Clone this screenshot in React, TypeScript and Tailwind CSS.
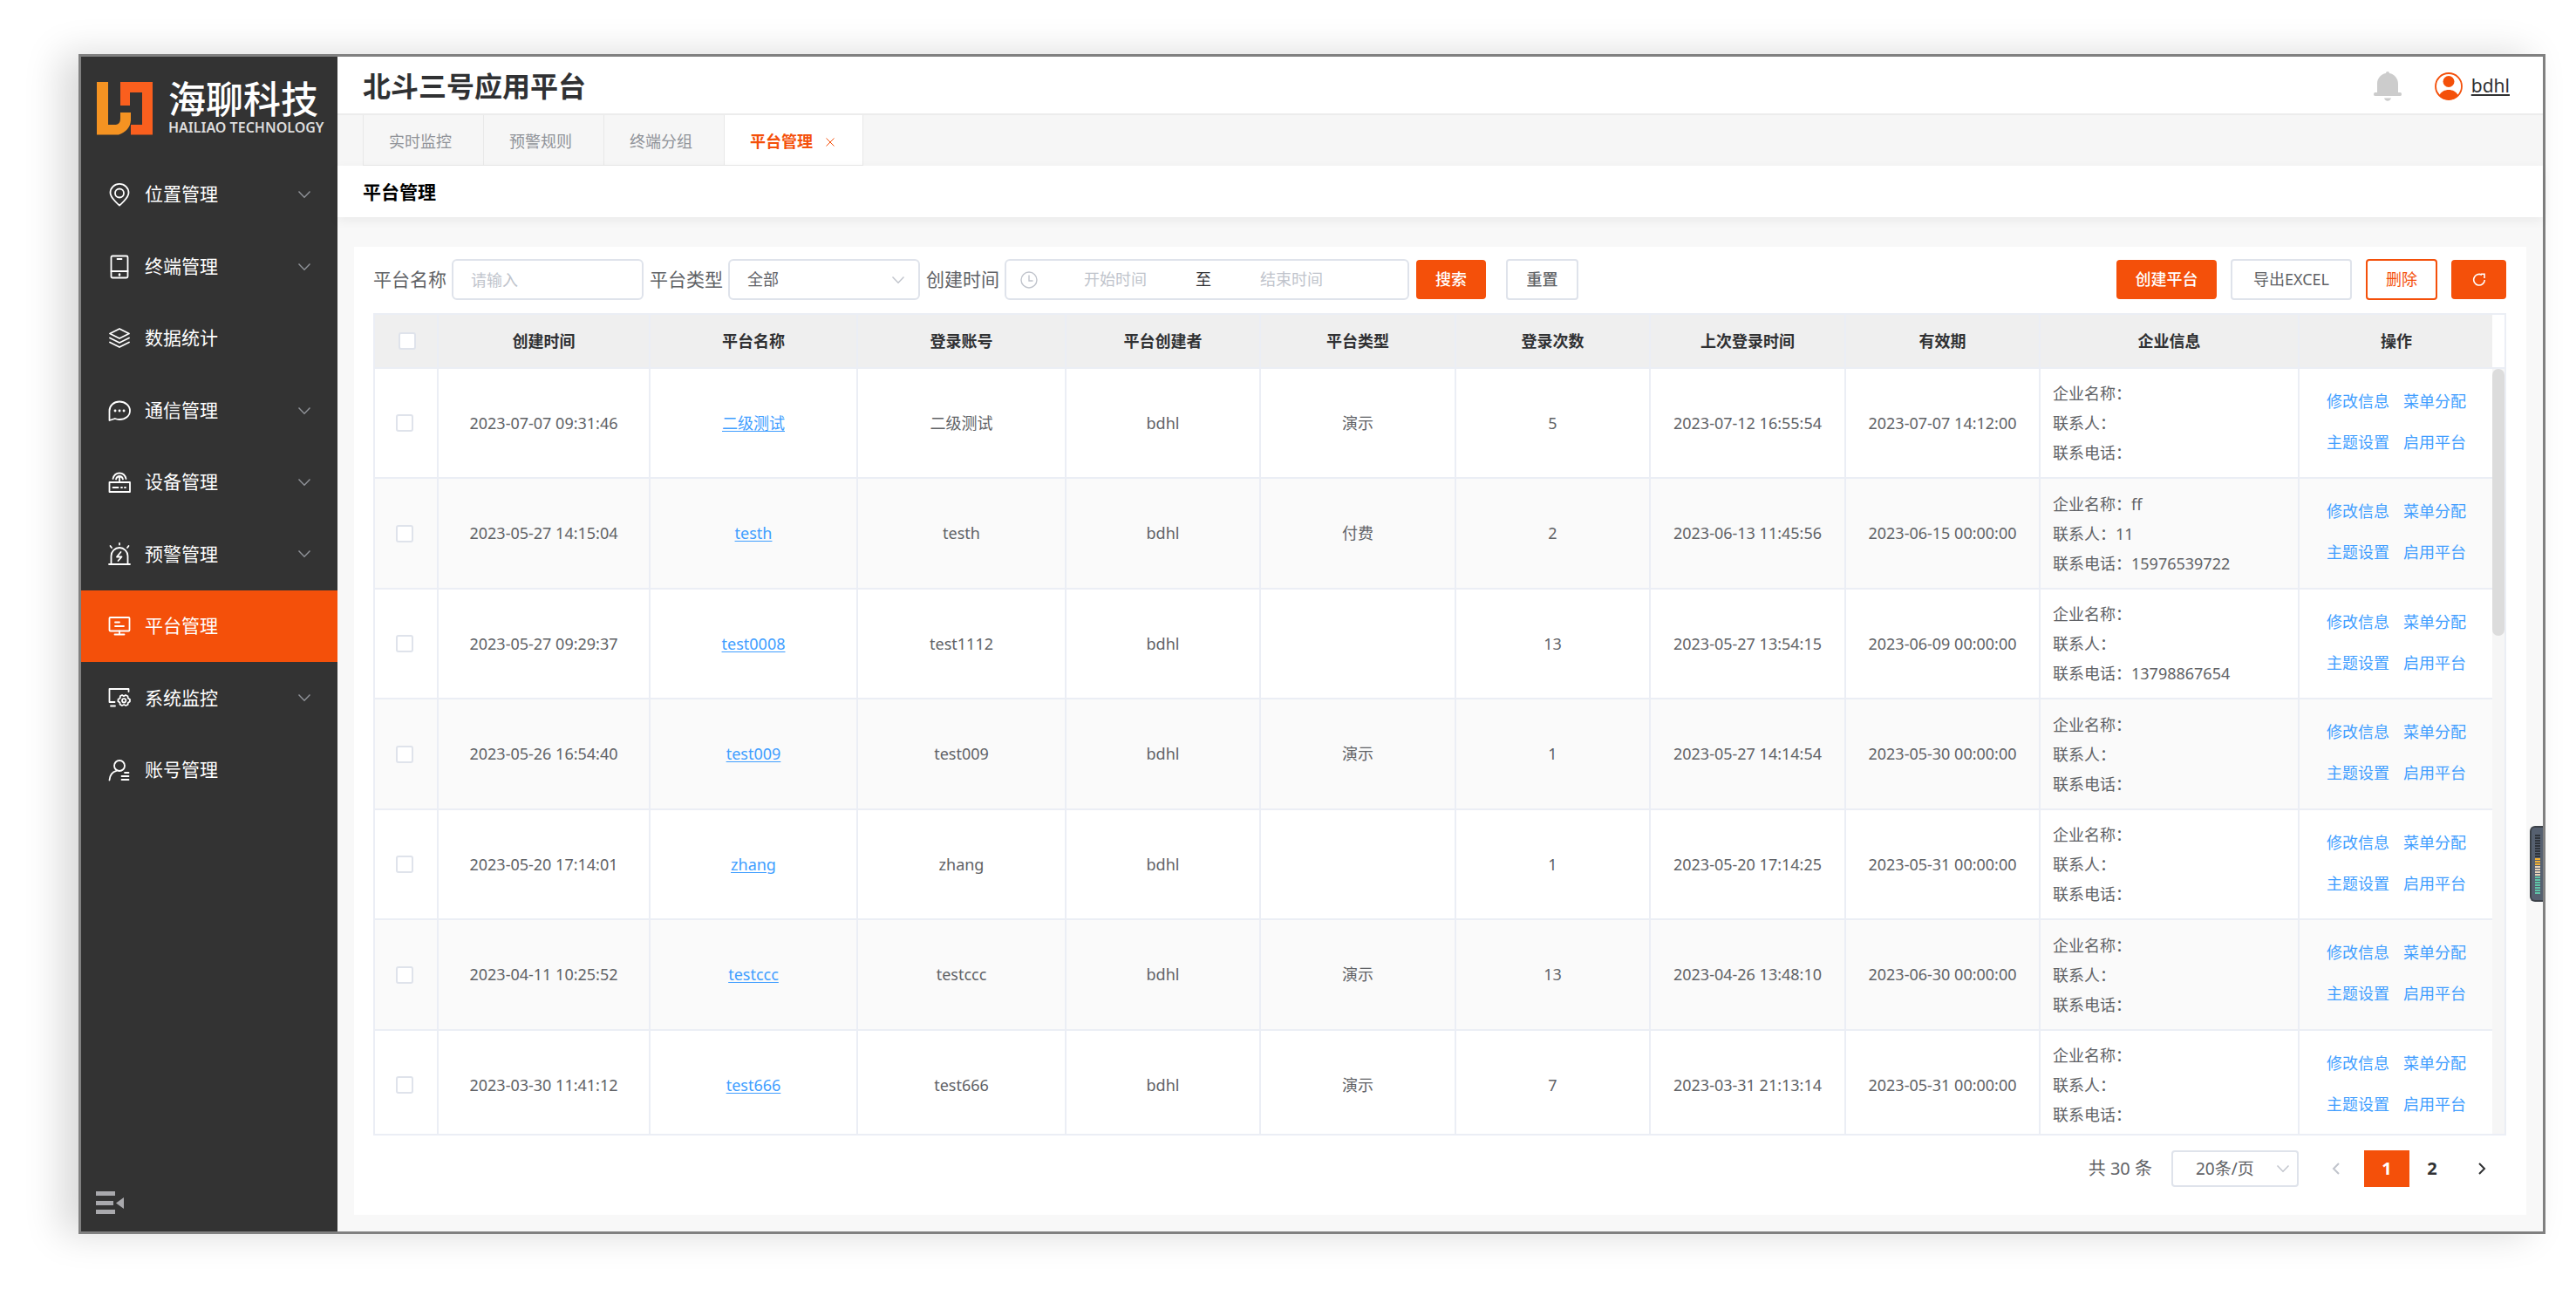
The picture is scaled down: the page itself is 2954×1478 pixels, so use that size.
import { useState, type ReactNode } from "react";

type Row = {
  created: string;
  name: string;
  account: string;
  owner: string;
  type: string;
  logins: number;
  lastLogin: string;
  expires: string;
  company?: string;
  contact?: string;
  phone?: string;
};

const ROWS: Row[] = [
  { created: "2023-07-07 09:31:46", name: "二级测试", account: "二级测试", owner: "bdhl", type: "演示", logins: 5, lastLogin: "2023-07-12 16:55:54", expires: "2023-07-07 14:12:00" },
  { created: "2023-05-27 14:15:04", name: "testh", account: "testh", owner: "bdhl", type: "付费", logins: 2, lastLogin: "2023-06-13 11:45:56", expires: "2023-06-15 00:00:00", company: "ff", contact: "11", phone: "15976539722" },
  { created: "2023-05-27 09:29:37", name: "test0008", account: "test1112", owner: "bdhl", type: "", logins: 13, lastLogin: "2023-05-27 13:54:15", expires: "2023-06-09 00:00:00", phone: "13798867654" },
  { created: "2023-05-26 16:54:40", name: "test009", account: "test009", owner: "bdhl", type: "演示", logins: 1, lastLogin: "2023-05-27 14:14:54", expires: "2023-05-30 00:00:00" },
  { created: "2023-05-20 17:14:01", name: "zhang", account: "zhang", owner: "bdhl", type: "", logins: 1, lastLogin: "2023-05-20 17:14:25", expires: "2023-05-31 00:00:00" },
  { created: "2023-04-11 10:25:52", name: "testccc", account: "testccc", owner: "bdhl", type: "演示", logins: 13, lastLogin: "2023-04-26 13:48:10", expires: "2023-06-30 00:00:00" },
  { created: "2023-03-30 11:41:12", name: "test666", account: "test666", owner: "bdhl", type: "演示", logins: 7, lastLogin: "2023-03-31 21:13:14", expires: "2023-05-31 00:00:00" },
];

const COLUMNS = [
  { label: "创建时间", width: "w-[243px]" },
  { label: "平台名称", width: "w-[238px]" },
  { label: "登录账号", width: "w-[239px]" },
  { label: "平台创建者", width: "w-[223px]" },
  { label: "平台类型", width: "w-[224px]" },
  { label: "登录次数", width: "w-[223px]" },
  { label: "上次登录时间", width: "w-[224px]" },
  { label: "有效期", width: "w-[223px]" },
  { label: "企业信息", width: "w-[297px]" },
  { label: "操作", width: "w-[224px]" },
];

const ACTIONS = ["修改信息", "菜单分配", "主题设置", "启用平台"];

function Icon({ children }: { children: ReactNode }) {
  return (
    <svg
      className="size-7"
      viewBox="0 0 28 28"
      fill="none"
      stroke="currentColor"
      strokeWidth="1.8"
      strokeLinecap="round"
      strokeLinejoin="round"
      aria-hidden="true"
    >
      {children}
    </svg>
  );
}

function ChevronDown({ className = "" }: { className?: string }) {
  return (
    <svg className={className} width="16" height="10" viewBox="0 0 16 10" fill="none" stroke="currentColor" strokeWidth="1.4" aria-hidden="true">
      <path d="M1.5 1.5 8 8.2l6.5-6.7" />
    </svg>
  );
}

const MENU: { label: string; expandable?: boolean; icon: ReactNode }[] = [
  {
    label: "位置管理",
    expandable: true,
    icon: (
      <Icon>
        <path d="M14 26.5S3.5 18 3.5 12a10.5 10.2 0 0 1 21 0C24.5 18 14 26.5 14 26.5Z" />
        <circle cx="14" cy="12.5" r="5" />
      </Icon>
    ),
  },
  {
    label: "终端管理",
    expandable: true,
    icon: (
      <Icon>
        <rect x="4.5" y="1.5" width="19" height="25" rx="1.5" />
        <path d="M4.5 19h19M11.5 5h5" />
        <path d="M14 22.5v1" strokeWidth="2.4" />
      </Icon>
    ),
  },
  {
    label: "数据统计",
    icon: (
      <Icon>
        <path d="m14 3 11 5.500L14 14 3 8.500 14 3ZM3 13.500 14 19l11-5.500M3 18.500 14 24l11-5.500" />
      </Icon>
    ),
  },
  {
    label: "通信管理",
    expandable: true,
    icon: (
      <Icon>
        <path d="M2.5 25V14C2.5 8 7.6 3.5 14 3.5S26 8 26 14s-5.400 10-12 10c-2 0-3.700-.4-5.200-1L2.5 25Z" />
        <path d="M9 14h.1M14 14h.1M19 14h.1" strokeWidth="2.8" />
      </Icon>
    ),
  },
  {
    label: "设备管理",
    expandable: true,
    icon: (
      <Icon>
        <rect x="2.5" y="14" width="23.5" height="11" />
        <path d="M6.5 20h6M16 20h1M20 20h1M14 14V9M6.5 10c1-4 4-6.500 7.500-6.500s6.500 2.500 7.500 6.500M10 10.500c.6-2.200 2.200-3.500 4-3.500s3.400 1.300 4 3.500" />
      </Icon>
    ),
  },
  {
    label: "预警管理",
    expandable: true,
    icon: (
      <Icon>
        <path d="M2 26h24M4.5 26V16.500a9.500 9.500 0 0 1 19 0V26M14 2v1.500M3.500 5l1.500 2M24.500 5 23 7" />
        <path d="m15.500 12-4.500 5.500h5.500L12.500 22" />
      </Icon>
    ),
  },
  {
    label: "平台管理",
    icon: (
      <Icon>
        <rect x="2.5" y="4" width="23" height="15.5" rx="1" />
        <path d="M9 9.500h5M9 14h10M14 19.500V23M8.500 23.500h11" />
      </Icon>
    ),
  },
  {
    label: "系统监控",
    expandable: true,
    icon: (
      <Icon>
        <path d="M24.500 7V4H2.500v15h6M4 23.500h5" />
        <path d="m15 12 2-1 2 1.200 2-1.200 2.500 1.200.3 2.300 2.200 1.500-.1 2.500-2 1.300-.4 2.200-2.200 1-2.200-1-2.200 1-2.200-1.200-.3-2.200-2-1.400.1-2.300 2.100-1.400Z" />
        <circle cx="19.2" cy="17.3" r="2.2" />
      </Icon>
    ),
  },
  {
    label: "账号管理",
    icon: (
      <Icon>
        <circle cx="14" cy="9" r="6" />
        <path d="M2.500 25.500c.5-6 3.500-9.500 8-10.700M20 17h4.500M16.500 21h8M16.500 25h8" />
      </Icon>
    ),
  },
];

function Sidebar() {
  return (
    <aside className="flex w-[294px] shrink-0 flex-col bg-[#333] text-white">
      <div className="flex items-center gap-[18px] pt-[27px] pl-[18px]">
        <svg width="64" height="61" viewBox="0 0 64 61" aria-hidden="true">
          <path fill="#f59322" d="M0 0h13v49h9q5-1 5-7v-7h12v9q-1 12-14 16.500H0Z" />
          <path fill="#fa5f1e" d="M27 0h37v60.500H39V49h13V12H38v15H27Z" />
        </svg>
        <div className="flex flex-col">
          <span className="text-[43px] leading-[44px] font-medium">海聊科技</span>
          <span className="text-[16px] leading-[20px] font-semibold text-[#ddd]">HAILIAO TECHNOLOGY</span>
        </div>
      </div>
      <nav className="mt-[26px] grid h-[742px] grid-rows-9">
        {MENU.map((item) => (
          <a
            key={item.label}
            href="#"
            className={
              item.label === "平台管理"
                ? "flex items-center bg-[#f4500a] pr-[30px] pl-[30px] text-[21px]"
                : "flex items-center pr-[30px] pl-[30px] text-[21px]"
            }
          >
            {item.icon}
            <span className="ml-[15px] flex-1">{item.label}</span>
            {item.expandable && <ChevronDown className="text-[#909399]" />}
          </a>
        ))}
      </nav>
      <button type="button" aria-label="收起菜单" className="mt-auto mb-[17px] ml-[17px] w-8 text-[#a9a9ad]">
        <svg width="32" height="30" viewBox="0 0 32 30" fill="currentColor" aria-hidden="true">
          <path d="M0 1h22v5H0zM0 12h20v5H0zM0 22h22v5H0zM32 8v13l-9-6.500z" />
        </svg>
      </button>
    </aside>
  );
}

function Header() {
  return (
    <header>
      <div className="flex h-[65px] items-center justify-between bg-white pt-[2px] pr-[38px] pl-[29px]">
        <h1 className="text-[32px] leading-[48px] font-bold text-[#303133]">北斗三号应用平台</h1>
        <div className="flex items-center">
          <button type="button" aria-label="通知" className="mr-[38px] text-[#ccc]">
            <svg width="32" height="34" viewBox="0 0 32 34" fill="currentColor" aria-hidden="true">
              <path d="M16 0c1.200 0 2 .8 2 2 6 1.200 10 6 10 12v10h2.500c2 0 2 4 0 4h-29c-2 0-2-4 0-4H4V14C4 8 8 3.200 14 2c0-1.200.8-2 2-2ZM12 30.500h8c-.5 2-2 3.200-4 3.200s-3.500-1.200-4-3.200Z" />
            </svg>
          </button>
          <svg width="32" height="32" viewBox="0 0 32 32" aria-hidden="true">
            <circle cx="16" cy="16" r="15" fill="none" stroke="#f4500a" strokeWidth="1.8" />
            <circle cx="16" cy="10.5" r="6.5" fill="#f4500a" />
            <path fill="#f4500a" d="M5 26.500C7.500 22 11.500 20 16 20s8.500 2 11 6.500C24.500 29.800 20.500 31.500 16 31.500S7.500 29.800 5 26.500Z" />
          </svg>
          <a href="#" className="ml-[10px] text-[21px] text-[#303133] underline underline-offset-2">bdhl</a>
        </div>
      </div>
      <nav className="flex h-[60px] border-t-2 border-[#ececec] bg-[#f6f6f6] pl-[29px] text-[18px] text-[#909399] *:border-r *:border-b *:border-[#e8e8e8] *:pt-1">
        <a href="#" className="flex w-[139px] items-center border-l pl-[29px]">实时监控</a>
        <a href="#" className="flex w-[138px] items-center pl-[29px]">预警规则</a>
        <a href="#" className="flex w-[138px] items-center pl-[29px]">终端分组</a>
        <a href="#" className="flex w-[159px] items-center gap-[15px] bg-white pl-[29px] font-bold text-[#f4500a]">
          平台管理
          <svg width="10" height="10" viewBox="0 0 10 10" stroke="currentColor" strokeWidth="1" aria-hidden="true">
            <path d="M.5.5l9 9M9.500.5l-9 9" />
          </svg>
        </a>
      </nav>
      <div className="relative flex h-[59px] items-center bg-white pt-[2px] pl-[29px] shadow-[0_4px_12px_rgba(0,0,0,0.06)]">
        <h2 className="text-[21px] font-bold text-black">平台管理</h2>
      </div>
    </header>
  );
}

function Filters() {
  return (
    <form className="flex items-center justify-between text-[18px] text-[#606266]" onSubmit={(e) => e.preventDefault()}>
      <div className="flex items-center">
        <label htmlFor="name" className="text-[21px]">平台名称</label>
        <input
          id="name"
          placeholder="请输入"
          className="ml-[6px] h-[47px] w-[220px] rounded-md border-2 border-[#dfe3eb] px-[20px] outline-none placeholder:text-[#c0c4cc]"
        />
        <label htmlFor="type" className="ml-[7px] text-[21px]">平台类型</label>
        <div className="relative ml-[6px]">
          <select id="type" className="h-[47px] w-[220px] appearance-none rounded-md border-2 border-[#dfe3eb] bg-white px-[20px] outline-none">
            <option>全部</option>
            <option>演示</option>
            <option>付费</option>
          </select>
          <ChevronDown className="pointer-events-none absolute top-[19px] right-[17px] text-[#c0c4cc]" />
        </div>
        <label htmlFor="start" className="ml-[7px] text-[21px]">创建时间</label>
        <div className="ml-[6px] flex h-[47px] w-[464px] items-center rounded-md border-2 border-[#dfe3eb] pl-4">
          <svg width="20" height="20" viewBox="0 0 20 20" fill="none" stroke="#c0c4cc" strokeWidth="1.4" aria-hidden="true">
            <circle cx="10" cy="10" r="9" />
            <path d="M10 4.500V11h4.500" />
          </svg>
          <input id="start" placeholder="开始时间" className="w-[178px] text-center outline-none placeholder:text-[#c0c4cc]" />
          <span className="w-6 text-center text-[#303133]">至</span>
          <input aria-label="结束时间" placeholder="结束时间" className="w-[178px] text-center outline-none placeholder:text-[#c0c4cc]" />
        </div>
        <button type="submit" className="ml-2 h-[45px] w-[80px] rounded-[4px] bg-[#f4500a] font-medium text-white">搜索</button>
        <button type="reset" className="ml-[23px] h-[47px] w-[83px] rounded-[4px] border-2 border-[#dfe3eb] font-medium">重置</button>
      </div>
      <div className="flex items-center gap-4">
        <button type="button" className="h-[45px] w-[115px] rounded-[4px] bg-[#f4500a] font-medium text-white">创建平台</button>
        <button type="button" className="h-[47px] w-[139px] rounded-[4px] border-2 border-[#dfe3eb]">导出EXCEL</button>
        <button type="button" className="h-[47px] w-[82px] rounded-[4px] border-2 border-[#f4500a] text-[#f4500a]">删除</button>
        <button type="button" aria-label="刷新" className="flex h-[45px] w-[63px] items-center justify-center rounded-[4px] bg-[#f4500a] text-white">
          <svg width="16" height="16" viewBox="0 0 16 16" fill="none" stroke="currentColor" strokeWidth="1.6" aria-hidden="true">
            <path d="M11 2.200A6.300 6.300 0 1 0 14.300 8M10 1.200h4V6" />
          </svg>
        </button>
      </div>
    </form>
  );
}

function Checkbox({ label }: { label: string }) {
  return (
    <input
      type="checkbox"
      aria-label={label}
      className="block size-[20px] appearance-none rounded-[3px] border-2 border-[#dfe3eb] bg-white checked:border-[#f4500a] checked:bg-[#f4500a]"
    />
  );
}

function PlatformTable() {
  return (
    <div className="mt-[15px] flex min-h-0 flex-1 border-2 border-[#ebeef5]">
      <div className="min-w-0 flex-1 overflow-hidden">
        <table className="w-full table-fixed border-separate border-spacing-0 text-center text-[18px] text-[#606266]">
          <thead>
            <tr className="h-[62px] bg-[#efefef] text-[#303133]">
              <th className="w-[73px] border-r-2 border-b-2 border-[#ebeef5] pl-[27px]">
                <Checkbox label="全选" />
              </th>
              {COLUMNS.map((col) => (
                <th key={col.label} className={`${col.width} border-r-2 border-b-2 border-[#ebeef5] font-bold`}>
                  {col.label}
                </th>
              ))}
            </tr>
          </thead>
          <tbody>
            {ROWS.map((row) => (
              <tr
                key={row.created}
                className="h-[126px] even:h-[127px] even:bg-[#fafafa] *:border-r-2 *:border-b-2 *:border-[#ebeef5]"
              >
                <td className="pl-[24px]">
                  <Checkbox label={`选择${row.name}`} />
                </td>
                <td>{row.created}</td>
                <td>
                  <a href="#" className="text-[#409eff] underline underline-offset-2">{row.name}</a>
                </td>
                <td>{row.account}</td>
                <td>{row.owner}</td>
                <td>{row.type}</td>
                <td>{row.logins}</td>
                <td>{row.lastLogin}</td>
                <td>{row.expires}</td>
                <td className="pl-[14px] text-left leading-[34px]">
                  <p>企业名称：{row.company}</p>
                  <p>联系人：{row.contact}</p>
                  <p>联系电话：{row.phone}</p>
                </td>
                <td className="pb-[3px]">
                  <div className="grid grid-cols-[auto_auto] justify-center gap-x-4 leading-[47px] text-[#409eff]">
                    {ACTIONS.map((action) => (
                      <button key={action} type="button">{action}</button>
                    ))}
                  </div>
                </td>
              </tr>
            ))}
          </tbody>
        </table>
      </div>
      {/* scroll track */}
      <div className="flex w-[14px] shrink-0 flex-col bg-[#f6f6f6]">
        <div className="h-[62px] border-b-2 border-[#ebeef5] bg-white" />
        <div className="h-[306px] rounded-full bg-[#dcdcdc]" />
      </div>
    </div>
  );
}

function Pagination() {
  const [page, setPage] = useState(1);
  const active = "h-[42px] w-[52px] bg-[#f4500a] text-white";
  const idle = "h-[42px] w-[52px] text-[#303133]";

  return (
    <div className="mt-[17px] flex h-[42px] items-center justify-end text-[#606266]">
      <span className="text-[20px]">共 30 条</span>
      <div className="relative ml-[22px]">
        <select aria-label="每页条数" className="h-[42px] w-[146px] appearance-none rounded-[4px] border-2 border-[#dfe3eb] bg-white pl-[26px] text-[19px] outline-none">
          <option>20条/页</option>
          <option>50条/页</option>
        </select>
        <ChevronDown className="pointer-events-none absolute top-[16px] right-[10px] text-[#c0c4cc]" />
      </div>
      <button type="button" aria-label="上一页" className="mr-[27px] ml-[38px] text-[#c0c4cc]">
        <svg width="10" height="14" viewBox="0 0 10 14" fill="none" stroke="currentColor" strokeWidth="2" aria-hidden="true">
          <path d="M8 1 2 7l6 6" />
        </svg>
      </button>
      <div className="flex text-[20px] font-bold">
        <button type="button" className={page === 1 ? active : idle} onClick={() => setPage(1)}>1</button>
        <button type="button" className={page === 2 ? active : idle} onClick={() => setPage(2)}>2</button>
      </div>
      <button type="button" aria-label="下一页" className="mr-[23px] ml-[26px] text-[#303133]">
        <svg width="10" height="14" viewBox="0 0 10 14" fill="none" stroke="currentColor" strokeWidth="2" aria-hidden="true">
          <path d="m2 1 6 6-6 6" />
        </svg>
      </button>
    </div>
  );
}

// Small level meter docked to the window's right edge
function LevelMeter() {
  return (
    <div className="absolute top-[882px] right-0 flex h-[87px] w-[15px] flex-col gap-px rounded-l-md border-2 border-r-0 border-[#3c4148] bg-[#566070] pt-2 pl-1">
      {Array.from({ length: 23 }, (_, i) => (
        <span
          key={i}
          className={`h-[2px] w-[6px] ${i < 9 ? "bg-[#2f343c]" : i < 12 ? "bg-[#f2b134]" : i < 16 ? "bg-[#e6d3b8]" : "bg-[#5fc4a8]"}`}
        />
      ))}
    </div>
  );
}

export default function App() {
  return (
    <div className="h-screen bg-white pt-[62px] pr-[35px] pb-[63px] pl-[90px] font-['Noto_Sans','Noto_Sans_CJK_SC',sans-serif]">
      <div className="relative flex h-full border-3 border-[#808080] bg-[#f8f8f8] shadow-[-20px_0_40px_rgba(0,0,0,0.15)]">
        <Sidebar />
        <div className="flex min-w-0 flex-1 flex-col">
          <Header />
          <main className="mt-[34px] mr-[19px] mb-[19px] ml-[19px] flex min-h-0 flex-1 flex-col bg-white pt-[14px] pr-[23px] pb-[32px] pl-[22px]">
            <Filters />
            <PlatformTable />
            <Pagination />
          </main>
        </div>
        <LevelMeter />
      </div>
    </div>
  );
}
